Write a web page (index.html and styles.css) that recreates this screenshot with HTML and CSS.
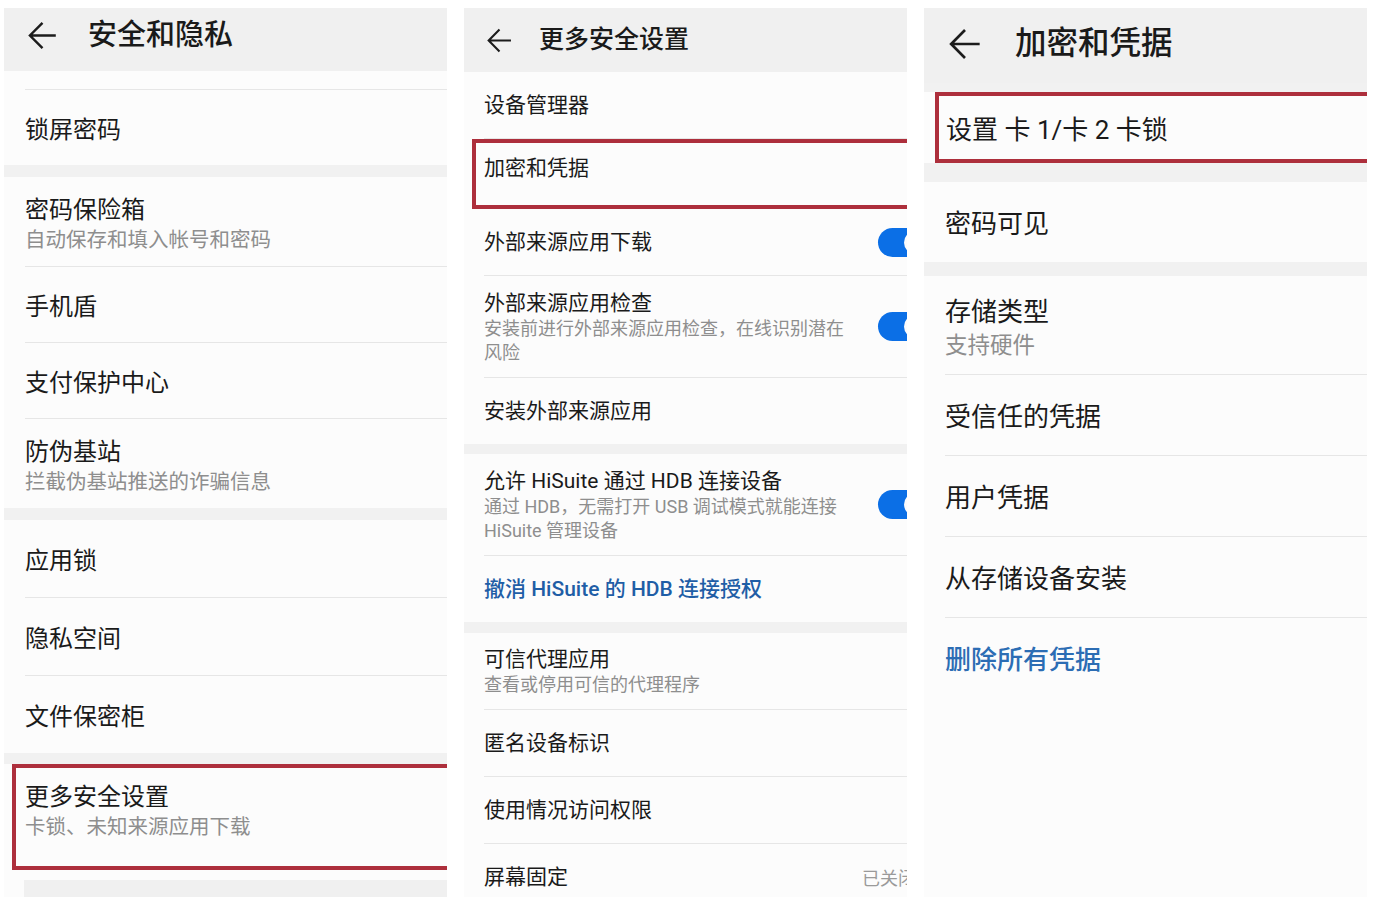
FILE: index.html
```html
<!DOCTYPE html>
<html lang="zh-CN">
<head>
  <meta charset="utf-8">
  <title>安全和隐私</title>
  <link rel="stylesheet" href="styles.css">
</head>
<body>
  <div class="shots">

    <!-- screen 1 -->
    <section class="phone one">
      <header class="bar">
        <svg class="back" viewBox="0 0 24 24"><path d="M23 12H1.6M12 1.5L1.6 12 12 22.5"/></svg>
        <h1>安全和隐私</h1>
      </header>
      <div class="group">
        <div class="lead"></div>
        <div class="row"><div class="text"><p class="title">锁屏密码</p></div></div>
      </div>
      <div class="band b12"></div>
      <div class="group">
        <div class="row two"><div class="text"><p class="title">密码保险箱</p><p class="sub">自动保存和填入帐号和密码</p></div></div>
        <div class="row"><div class="text"><p class="title">手机盾</p></div></div>
        <div class="row"><div class="text"><p class="title">支付保护中心</p></div></div>
        <div class="row two"><div class="text"><p class="title">防伪基站</p><p class="sub">拦截伪基站推送的诈骗信息</p></div></div>
      </div>
      <div class="band b12"></div>
      <div class="group roomy">
        <div class="row"><div class="text"><p class="title">应用锁</p></div></div>
        <div class="row"><div class="text"><p class="title">隐私空间</p></div></div>
        <div class="row"><div class="text"><p class="title">文件保密柜</p></div></div>
      </div>
      <div class="band b11"></div>
      <div class="group fill">
        <div class="row hl"><div class="text"><p class="title">更多安全设置</p><p class="sub">卡锁、未知来源应用下载</p></div></div>
        <div class="stub"></div>
      </div>
    </section>

    <!-- screen 2 -->
    <section class="phone two-up">
      <header class="bar">
        <svg class="back" viewBox="0 0 24 24"><path d="M23 12H1.6M12 1.5L1.6 12 12 22.5"/></svg>
        <h1>更多安全设置</h1>
      </header>
      <div class="group">
        <div class="row"><div class="text"><p class="title">设备管理器</p></div></div>
        <div class="row hl"><div class="text"><p class="title">加密和凭据</p></div></div>
        <div class="row sw"><div class="text"><p class="title">外部来源应用下载</p></div><span class="switch"></span></div>
        <div class="row three sw"><div class="text"><p class="title">外部来源应用检查</p><p class="sub">安装前进行外部来源应用检查，在线识别潜在风险</p></div><span class="switch"></span></div>
        <div class="row"><div class="text"><p class="title">安装外部来源应用</p></div></div>
      </div>
      <div class="band b10"></div>
      <div class="group">
        <div class="row three sw"><div class="text"><p class="title">允许 HiSuite 通过 HDB 连接设备</p><p class="sub">通过 HDB，无需打开 USB 调试模式就能连接 HiSuite 管理设备</p></div><span class="switch"></span></div>
        <div class="row"><div class="text"><p class="title link">撤消 HiSuite 的 HDB 连接授权</p></div></div>
      </div>
      <div class="band b11"></div>
      <div class="group fill">
        <div class="row two"><div class="text"><p class="title">可信代理应用</p><p class="sub">查看或停用可信的代理程序</p></div></div>
        <div class="row"><div class="text"><p class="title">匿名设备标识</p></div></div>
        <div class="row"><div class="text"><p class="title">使用情况访问权限</p></div></div>
        <div class="row"><div class="text"><p class="title">屏幕固定</p></div><span class="state">已关闭</span></div>
      </div>
    </section>

    <!-- screen 3 -->
    <section class="phone three-up">
      <header class="bar">
        <svg class="back" viewBox="0 0 24 24"><path d="M23 12H1.6M12 1.5L1.6 12 12 22.5"/></svg>
        <h1>加密和凭据</h1>
      </header>
      <div class="band b9"></div>
      <div class="group">
        <div class="row hl"><div class="text"><p class="title">设置 卡 1/卡 2 卡锁</p></div></div>
      </div>
      <div class="band b19"></div>
      <div class="group">
        <div class="row"><div class="text"><p class="title">密码可见</p></div></div>
      </div>
      <div class="band b14"></div>
      <div class="group fill">
        <div class="row two"><div class="text"><p class="title">存储类型</p><p class="sub">支持硬件</p></div></div>
        <div class="row"><div class="text"><p class="title">受信任的凭据</p></div></div>
        <div class="row"><div class="text"><p class="title">用户凭据</p></div></div>
        <div class="row"><div class="text"><p class="title">从存储设备安装</p></div></div>
        <div class="row"><div class="text"><p class="title link">删除所有凭据</p></div></div>
      </div>
    </section>

  </div>
</body>
</html>
```

FILE: styles.css
```css
body {
  margin: 0;
  background: #ffffff;
  font-family: Roboto, "Noto Sans CJK SC", sans-serif;
}

.shots {
  display: flex;
  gap: 17px;
  padding: 8px 0 0 4px;
}

.phone {
  width: 443px;
  height: 889px;
  flex: none;
  overflow: hidden;
  display: flex;
  flex-direction: column;
  background: #f1f1f1;
  color: #1a1a1a;
}

/* header */
.bar {
  display: flex;
  align-items: center;
  flex: none;
  height: var(--bar);
  padding-bottom: var(--bar-lift);
  box-sizing: border-box;
  background: #f0f0f0;
}
.back {
  width: var(--arrow);
  height: var(--arrow);
  margin-left: var(--arrow-x);
  flex: none;
  fill: none;
  stroke: #1c1c1c;
  stroke-width: 2;
}
.bar h1 {
  margin: 0 0 0 var(--title-x);
  font-size: var(--title);
  font-weight: 500;
  line-height: 1.2;
}

/* list */
.group {
  background: #fcfcfc;
}
.group.fill {
  flex: 1;
}
.band {
  flex: none;
}
.b9 { height: 9px; }
.b10 { height: 10px; }
.b11 { height: 11px; }
.b12 { height: 12px; }
.b14 { height: 14px; }
.b19 { height: 19px; }

.lead {
  height: 18px;
  margin-left: var(--inset);
  border-bottom: 1px solid #e6e6e6;
}

.row {
  display: flex;
  align-items: center;
  height: var(--row);
  margin-left: var(--inset);
  border-bottom: 1px solid #e6e6e6;
}
.row:last-child,
.row:has(+ .stub) {
  border-bottom: none;
}
.row.two { height: var(--row2); }
.row.three { height: var(--row3); }

.row.hl {
  height: var(--hl);
  margin-left: var(--box);
  padding-left: var(--pad);
  padding-bottom: var(--hl-lift);
  box-sizing: border-box;
  border: 4px solid #ad2f3c;
  border-right: none;
}

.text {
  margin-top: var(--nudge);
}
.text p {
  margin: 0;
}
.title {
  font-size: var(--fs);
  line-height: var(--fs-lh);
}
.sub {
  font-size: var(--sub);
  line-height: var(--sub-lh);
  color: #8e8e8e;
}
.link {
  font-weight: 500;
  color: #1f5ea6;
}

.sw .text {
  max-width: 366px;
}
.switch {
  position: relative;
  flex: none;
  width: 52px;
  height: 29px;
  margin-left: auto;
  margin-right: -23px;
  border-radius: 15px;
  background: #0b6fe6;
}
.switch::after {
  content: "";
  position: absolute;
  top: 3px;
  right: 3px;
  width: 23px;
  height: 23px;
  border-radius: 50%;
  background: #fcfcfc;
}
.state {
  margin-left: auto;
  margin-right: -9px;
  font-size: 18px;
  color: #9a9a9a;
  white-space: nowrap;
}

.stub {
  height: 18px;
  margin: 10px 0 0 20px;
  background: #f0f0f0;
}

/* per-screen scale */
.one {
  --bar: 63px;
  --bar-lift: 8px;
  --arrow: 29px;
  --arrow-x: 24px;
  --title-x: 31px;
  --title: 29px;
  --inset: 21px;
  --box: 8px;
  --pad: 9px;
  --row: 75px;
  --row2: 89px;
  --row3: 100px;
  --hl: 106px;
  --hl-lift: 16px;
  --nudge: 4px;
  --fs: 24px;
  --fs-lh: 32px;
  --sub: 20.5px;
  --sub-lh: 28px;
}
.one .roomy .row {
  height: 77px;
}

.two-up {
  --bar: 64px;
  --bar-lift: 0px;
  --arrow: 25px;
  --arrow-x: 23px;
  --title-x: 27px;
  --title: 25px;
  --inset: 20px;
  --box: 8px;
  --pad: 8px;
  --row: 66px;
  --row2: 76px;
  --row3: 101px;
  --hl: 70px;
  --hl-lift: 12px;
  --nudge: 0px;
  --fs: 21px;
  --fs-lh: 28px;
  --sub: 18px;
  --sub-lh: 24px;
}

.three-up {
  --bar: 75px;
  --bar-lift: 4px;
  --arrow: 32px;
  --arrow-x: 25px;
  --title-x: 34px;
  --title: 31.5px;
  --inset: 21px;
  --box: 11px;
  --pad: 7px;
  --row: 80px;
  --row2: 98px;
  --row3: 110px;
  --hl: 71px;
  --hl-lift: 0px;
  --nudge: 4px;
  --fs: 26px;
  --fs-lh: 36px;
  --sub: 22.5px;
  --sub-lh: 30px;
}
.three-up .link {
  color: #2c6db4;
}
```
